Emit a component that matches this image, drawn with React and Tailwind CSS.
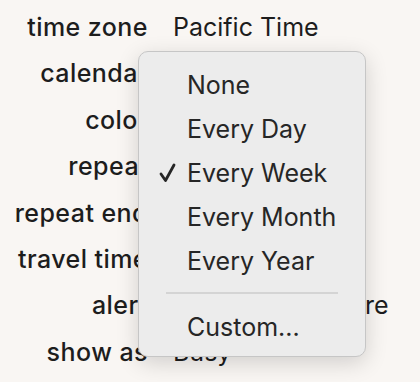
import React from "react";

const rows = [
  ["time zone", "Pacific Time"],
  ["calendar", "Work"],
  ["color", "Blue"],
  ["repeat", "Every Week"],
  ["repeat end", "Never"],
  ["travel time", "None"],
  ["alert", "30 minutes before"],
  ["show as", "Busy"],
];

const items = ["None", "Every Day", "Every Week", "Every Month", "Every Year"];

export default function App() {
  return (
    <div
      className="relative w-[420px] h-[382px] overflow-hidden bg-[#f9f6f3] text-[#1d1d1d]"
      style={{ fontFamily: 'Inter, "Noto Sans", sans-serif' }}
    >
      <div className="pt-[4px]">
        {rows.map(([label, value]) => (
          <div key={label} className="grid grid-cols-[148px_1fr] gap-x-[25px] h-[46.4px] leading-[46.4px] text-[25px] whitespace-nowrap">
            <div className="text-right font-medium tracking-[0.45px]">{label}</div>
            <div className="font-normal">{value}</div>
          </div>
        ))}
      </div>

      <div className="absolute left-[138px] top-[51px] w-[228px] rounded-[10px] border border-[#c6c6c6] bg-[#ececec] shadow-[0_6px_22px_rgba(0,0,0,0.16)] pt-[11px] pb-[7px] text-[25px] text-[#262626]">
        {items.map((it) => (
          <div key={it} className="relative h-[44px] leading-[44px] pl-[48px]">
            {it === "Every Week" && (
              <svg
                className="absolute left-[20px] top-[12px]"
                width="17"
                height="20"
                viewBox="0 0 17 20"
                fill="none"
              >
                <path
                  d="M2 11 L6.5 17.5 L15 2"
                  stroke="#262626"
                  strokeWidth="2.8"
                  strokeLinecap="round"
                  strokeLinejoin="round"
                />
              </svg>
            )}
            {it}
          </div>
        ))}
        <div className="mx-[27px] mt-[9px] mb-[11px] h-[2px] bg-[#d4d4d4]" />
        <div className="h-[44px] leading-[44px] pl-[48px]">Custom...</div>
      </div>
    </div>
  );
}
